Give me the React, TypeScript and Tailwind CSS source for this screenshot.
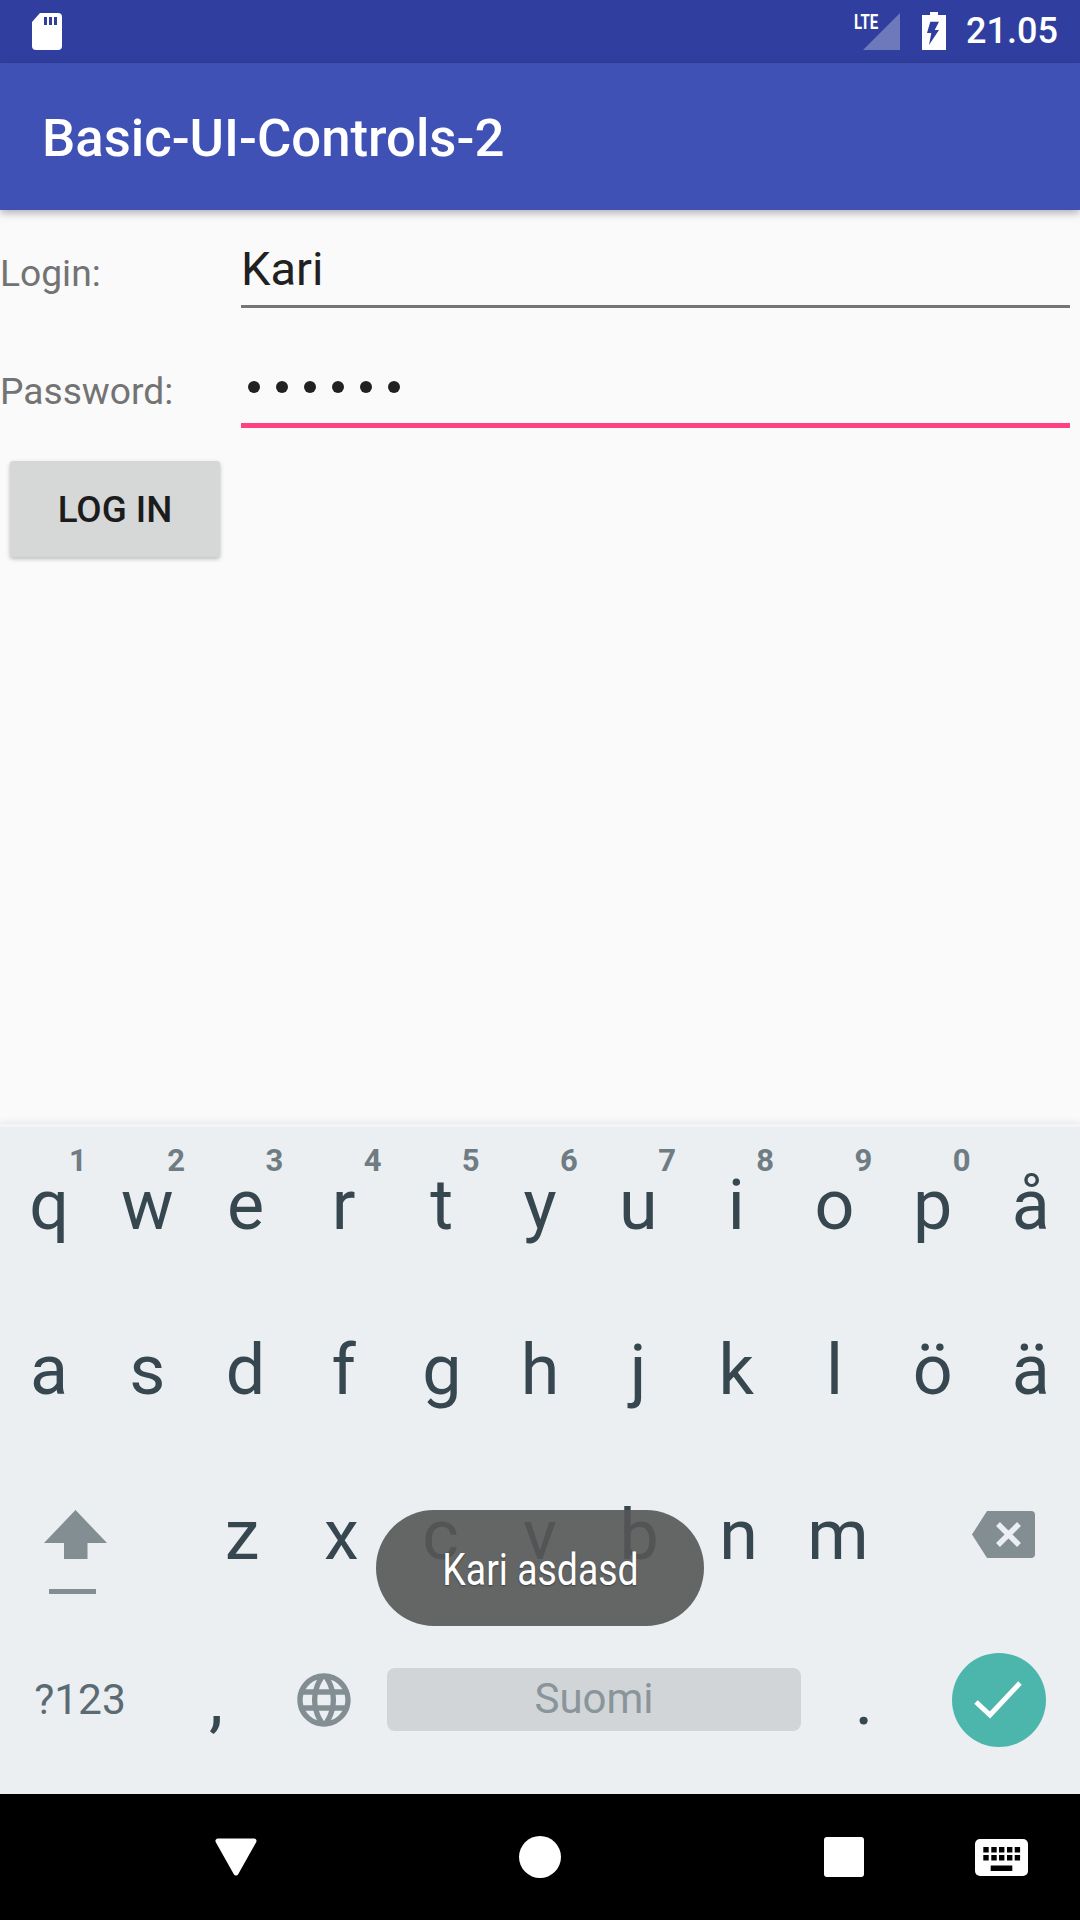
const roboto = "font-['Roboto',sans-serif]";

function Key({ ch, hint }: { ch: string; hint?: string }) {
  return (
    <div className="relative flex justify-center pt-[43px]">
      {hint && (
        <span className="absolute left-[78px] top-[18px] -translate-x-1/2 text-[31px] leading-none font-bold text-[#6f7c83]">
          {hint}
        </span>
      )}
      <span className="text-[70px] leading-none text-[#37474f]">{ch}</span>
    </div>
  );
}

function Letter({ ch }: { ch: string }) {
  return (
    <div className="flex w-[99.3px] justify-center pt-[43px]">
      <span className="text-[70px] leading-none text-[#37474f]">{ch}</span>
    </div>
  );
}

export default function App() {
  const row1 = ["q", "w", "e", "r", "t", "y", "u", "i", "o", "p", "å"];
  const hints = ["1", "2", "3", "4", "5", "6", "7", "8", "9", "0"];
  const row2 = ["a", "s", "d", "f", "g", "h", "j", "k", "l", "ö", "ä"];
  const row3 = ["z", "x", "c", "v", "b", "n", "m"];
  return (
    <div className={`relative flex h-[1920px] w-[1080px] flex-col overflow-hidden bg-[#fafafa] ${roboto}`}>
      {/* status bar */}
      <div className="flex h-[63px] shrink-0 items-start bg-[#303f9f] text-white">
        <svg className="ml-[32px] mt-[13px]" width="30" height="37" viewBox="0 0 30 37">
          <path d="M8 0H26a4 4 0 0 1 4 4V33a4 4 0 0 1-4 4H4a4 4 0 0 1-4-4V9z" fill="#fff" />
          <rect x="12" y="4" width="3" height="8" fill="#303f9f" />
          <rect x="17" y="4" width="3" height="8" fill="#303f9f" />
          <rect x="22" y="4" width="3" height="8" fill="#303f9f" />
        </svg>
        <div className="relative ml-[792px] mt-[13px] h-[37px] w-[46px]">
          <svg className="absolute right-0 top-0" width="37" height="37" viewBox="0 0 37 37">
            <path d="M0 37L37 0V37z" fill="#fff" fillOpacity="0.3" />
          </svg>
          <span className="absolute left-0 top-0 origin-left scale-x-75 text-[20px] leading-[18px] font-bold">LTE</span>
        </div>
        <svg className="ml-[22px] mt-[12px]" width="24" height="38" viewBox="0 0 24 38">
          <path d="M8 0H16V3H24V38H0V3H8z" fill="#fff" />
          <path d="M8.3 9.7H17L12.7 18H17L7 33L9.3 21H5z" fill="#303f9f" />
        </svg>
        <span className="ml-[20px] mt-[13px] text-[36px] leading-[37px] font-medium">21.05</span>
      </div>

      {/* app bar */}
      <div className="z-10 flex h-[147px] shrink-0 items-center bg-[#3f51b5] pl-[42px] shadow-[0_3px_8px_rgba(0,0,0,0.3)]">
        <span className="pt-[3px] text-[52.7px] leading-none font-medium text-white">Basic-UI-Controls-2</span>
      </div>

      {/* form */}
      <div className="flex flex-1 flex-col">
        <div className="mt-[35px] flex h-[63px] items-start">
          <span className="mt-[10px] w-[241px] shrink-0 text-[37.2px] leading-none text-[#737373]">Login:</span>
          <div className="mr-[10px] h-[63px] flex-1 border-b-[3px] border-[#757575] text-[47px] leading-none text-[#212121]">
            Kari
          </div>
        </div>
        <div className="mt-[32px] flex h-[88px] items-start">
          <span className="mt-[33px] w-[241px] shrink-0 text-[37.2px] leading-none text-[#737373]">Password:</span>
          <div className="mr-[10px] flex h-[88px] flex-1 items-start gap-[16px] border-b-[5px] border-[#ff4081] pl-[7px] pt-[41px]">
            {[0, 1, 2, 3, 4, 5].map((i) => (
              <span key={i} className="h-[12px] w-[12px] rounded-full bg-[#212121]" />
            ))}
          </div>
        </div>
        <div className="ml-[10px] mt-[33px] flex h-[96px] w-[210px] items-center justify-center rounded-[3px] bg-[#d6d7d7] pt-[3px] text-[36.75px] leading-none font-medium text-[#1c1c1c] shadow-[0_2px_4px_rgba(0,0,0,0.25)]">
          LOG IN
        </div>
      </div>

      {/* keyboard */}
      <div className="h-[670px] shrink-0 border-t-[3px] border-[#f4f5f6] bg-[#eceff2] shadow-[0_-3px_6px_rgba(0,0,0,0.06)]">
        <div className="grid h-[165px] grid-cols-11">
          {row1.map((c, i) => (
            <Key key={c} ch={c} hint={hints[i]} />
          ))}
        </div>
        <div className="grid h-[165px] grid-cols-11">
          {row2.map((c) => (
            <Key key={c} ch={c} />
          ))}
        </div>
        <div className="flex h-[165px]">
          <div className="w-[192.4px] pl-[44px] pt-[53px]">
            <svg width="64" height="84" viewBox="0 0 64 84" fill="#828e92">
              <path d="M31.5 0L63 33H43.5V49H20V33H0z" />
              <rect x="5" y="79" width="47" height="5" />
            </svg>
          </div>
          {row3.map((c) => (
            <Letter key={c} ch={c} />
          ))}
          <div className="flex-1 pl-[85px] pt-[54px]">
            <svg width="64" height="48" viewBox="0 0 64 48">
              <path d="M15 0H59a4 4 0 0 1 4 4V43a4 4 0 0 1-4 4H15L0 23.5z" fill="#828e92" />
              <path d="M26 13L47 34M47 13L26 34" stroke="#eceff2" strokeWidth="5.5" />
            </svg>
          </div>
        </div>
        <div className="flex h-[172px] items-center pb-[16px]">
          <div className="flex w-[160px] justify-center text-[42.5px] leading-none text-[#5b6b73]">?123</div>
          <div className="flex w-[112px] justify-center text-[72px] leading-none text-[#37474f]">,</div>
          <div className="flex w-[104px] justify-center">
            <svg width="64" height="64" viewBox="0 0 24 24" fill="#828e92">
              <path d="M11.99 2C6.47 2 2 6.48 2 12s4.47 10 9.99 10C17.52 22 22 17.52 22 12S17.52 2 11.99 2zm6.93 6h-2.95c-.32-1.25-.78-2.45-1.38-3.56 1.84.63 3.37 1.91 4.33 3.56zM12 4.04c.83 1.2 1.48 2.53 1.91 3.96h-3.82c.43-1.43 1.08-2.76 1.91-3.96zM4.26 14C4.1 13.36 4 12.69 4 12s.1-1.36.26-2h3.38c-.08.66-.14 1.32-.14 2 0 .68.06 1.34.14 2H4.26zm.82 2h2.95c.32 1.25.78 2.45 1.38 3.56-1.84-.63-3.37-1.9-4.33-3.56zm2.95-8H5.08c.96-1.66 2.49-2.93 4.33-3.56C8.81 5.55 8.35 6.75 8.03 8zM12 19.96c-.83-1.2-1.48-2.53-1.91-3.96h3.82c-.43 1.43-1.08 2.76-1.91 3.96zM14.34 14H9.66c-.09-.66-.16-1.32-.16-2 0-.68.07-1.35.16-2h4.68c.09.65.16 1.32.16 2 0 .68-.07 1.34-.16 2zm.25 5.56c.6-1.11 1.06-2.31 1.38-3.56h2.95c-.96 1.65-2.49 2.93-4.33 3.56zM16.36 14c.08-.66.14-1.32.14-2 0-.68-.06-1.34-.14-2h3.38c.16.64.26 1.31.26 2s-.1 1.36-.26 2h-3.38z" />
            </svg>
          </div>
          <div className="mb-[2px] ml-[11px] flex h-[63px] w-[414px] items-center justify-center rounded-[8px] bg-[#d1d5d8] text-[42px] leading-none text-[#8a959b]">
            Suomi
          </div>
          <div className="flex w-[126px] justify-center text-[72px] leading-none text-[#37474f]">.</div>
          <div className="flex w-[144px] justify-center">
            <svg width="94" height="94" viewBox="0 0 94 94">
              <circle cx="47" cy="47" r="47" fill="#4db6ac" />
              <path d="M24 49L38 62L68 30" fill="none" stroke="#fff" strokeWidth="5" />
            </svg>
          </div>
        </div>
      </div>

      {/* nav bar */}
      <div className="flex h-[126px] shrink-0 items-center bg-black pl-[215px]">
        <svg width="42" height="38" viewBox="0 0 42 38">
          <path d="M3 3H39L21 35z" fill="#fff" stroke="#fff" strokeWidth="5" strokeLinejoin="round" />
        </svg>
        <span className="ml-[262px] h-[42px] w-[42px] rounded-full bg-white" />
        <span className="ml-[263px] h-[40px] w-[40px] rounded-[3px] bg-white" />
        <svg className="ml-[111px]" width="53" height="37" viewBox="0 0 53 37">
          <rect width="53" height="37" rx="5" fill="#fff" />
          <g fill="#000">
            <rect x="8.3" y="8" width="5.4" height="5.5" />
            <rect x="16.3" y="8" width="5.4" height="5.5" />
            <rect x="24" y="8" width="5.4" height="5.5" />
            <rect x="32" y="8" width="5.4" height="5.5" />
            <rect x="39.7" y="8" width="5.4" height="5.5" />
            <rect x="8.3" y="16" width="5.4" height="5.5" />
            <rect x="16.3" y="16" width="5.4" height="5.5" />
            <rect x="24" y="16" width="5.4" height="5.5" />
            <rect x="32" y="16" width="5.4" height="5.5" />
            <rect x="39.7" y="16" width="5.4" height="5.5" />
            <rect x="15.7" y="26.5" width="21.6" height="5.5" />
          </g>
        </svg>
      </div>

      {/* toast */}
      <div className="absolute left-[376px] top-[1510px] z-20 flex h-[116px] w-[328px] items-center justify-center rounded-[58px] bg-[#555555]/90 pt-[3px]">
        <span className="scale-x-85 text-[44px] leading-none text-white [text-shadow:0_1px_2px_rgba(0,0,0,0.4)]">Kari asdasd</span>
      </div>
    </div>
  );
}
